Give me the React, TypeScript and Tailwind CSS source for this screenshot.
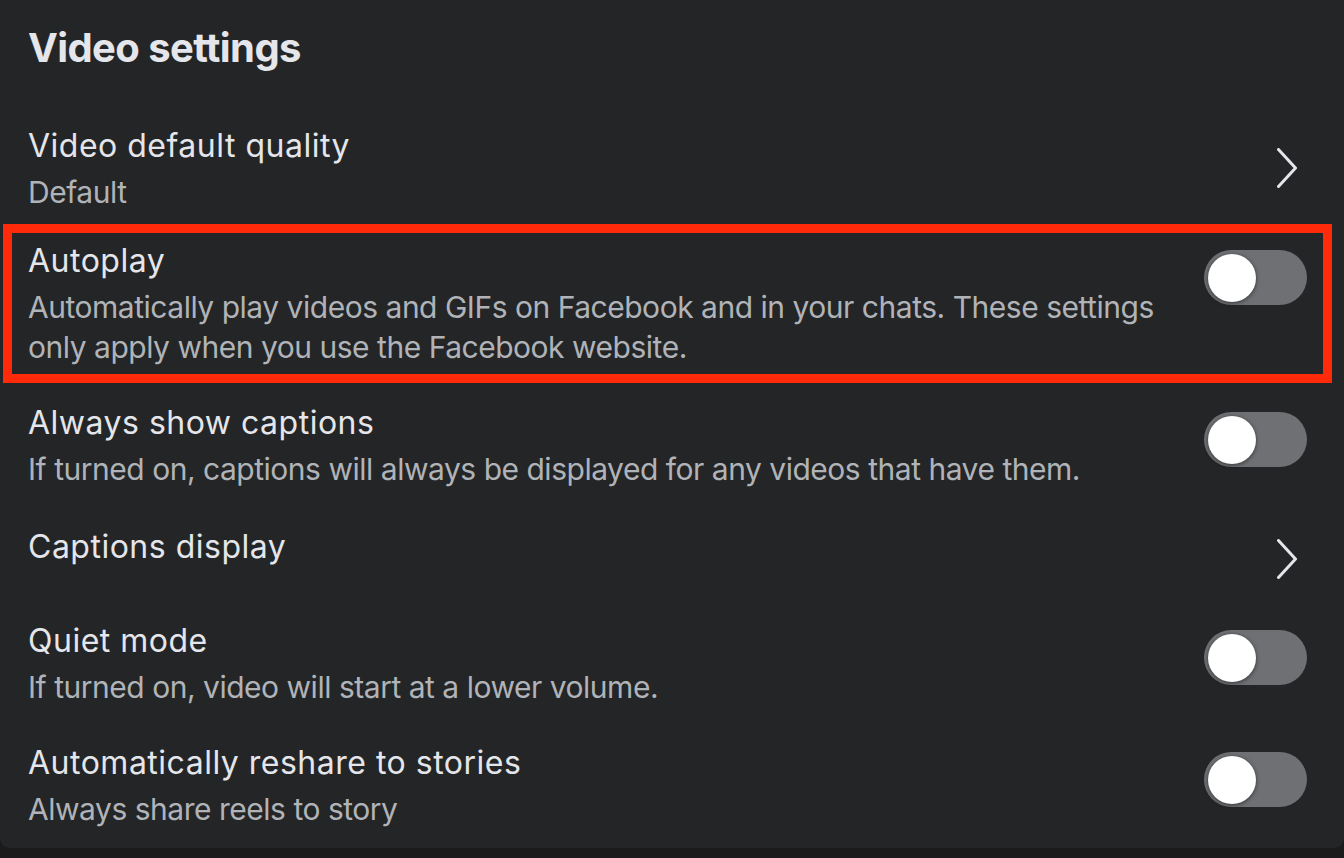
import type { ReactNode } from 'react';

type Control = 'toggle' | 'chevron';

function Toggle() {
  return (
    <div className="mt-[9px] flex h-[55px] w-[103px] shrink-0 items-center rounded-full bg-[#6f7074] pl-[4px]">
      <div className="h-[48px] w-[48px] rounded-full bg-white shadow-[0_1px_4px_rgba(0,0,0,0.55)]" />
    </div>
  );
}

function Chevron({ mt }: { mt: string }) {
  return (
    <svg
      viewBox="0 0 20 40"
      className={`${mt} mr-[10px] h-[40px] w-[20px] shrink-0`}
      fill="none"
      stroke="#e4e6eb"
      strokeWidth="3"
      strokeLinecap="round"
      strokeLinejoin="round"
    >
      <path d="M1.5 1.5 L18.5 20 L1.5 38.5" />
    </svg>
  );
}

function SettingRow({ title, sub, control, chevronMt }: { title: string; sub?: ReactNode; control: Control; chevronMt?: string }) {
  return (
    <div className="flex items-start justify-between gap-6 pl-[28px] pr-[37px]">
      <div className="flex-1">
        <div className="text-[32px] leading-[40px] tracking-[0.5px] text-[#e4e6eb]">{title}</div>
        {sub && <div className="mt-[6px] text-[30px] leading-[40px] tracking-[-0.48px] text-[#b0b3b8]">{sub}</div>}
      </div>
      {control === 'toggle' ? <Toggle /> : <Chevron mt={chevronMt ?? 'mt-0'} />}
    </div>
  );
}

export default function App() {
  return (
    <div className="h-[858px] w-full overflow-hidden bg-[#1b1b1c] font-['Inter',sans-serif]">
      <div className="flex h-[848px] flex-col rounded-b-[10px] bg-[#242526]">
        <h1 className="mt-[24px] pl-[28px] text-[40px] font-bold leading-[48px] tracking-[-0.6px] text-[#e4e6eb]">Video settings</h1>

        {/* Video default quality */}
        <div className="mt-[54px]">
          <SettingRow title="Video default quality" sub="Default" control="chevron" chevronMt="mt-[22px]" />
        </div>

        {/* Autoplay, highlighted */}
        <div className="relative mt-[29px]">
          <SettingRow
            title="Autoplay"
            sub="Automatically play videos and GIFs on Facebook and in your chats. These settings only apply when you use the Facebook website."
            control="toggle"
          />
          <div className="pointer-events-none absolute top-[-17px] bottom-[-16px] left-[3px] right-[12px] border-[9px] border-[#ff2a0a]" />
        </div>

        <div className="mt-[36px]">
          <SettingRow
            title="Always show captions"
            sub="If turned on, captions will always be displayed for any videos that have them."
            control="toggle"
          />
        </div>

        <div className="mt-[38px]">
          <SettingRow title="Captions display" control="chevron" chevronMt="mt-[12px]" />
        </div>

        <div className="mt-[42px]">
          <SettingRow title="Quiet mode" sub="If turned on, video will start at a lower volume." control="toggle" />
        </div>

        <div className="mt-[36px]">
          <SettingRow title="Automatically reshare to stories" sub="Always share reels to story" control="toggle" />
        </div>
      </div>
    </div>
  );
}
